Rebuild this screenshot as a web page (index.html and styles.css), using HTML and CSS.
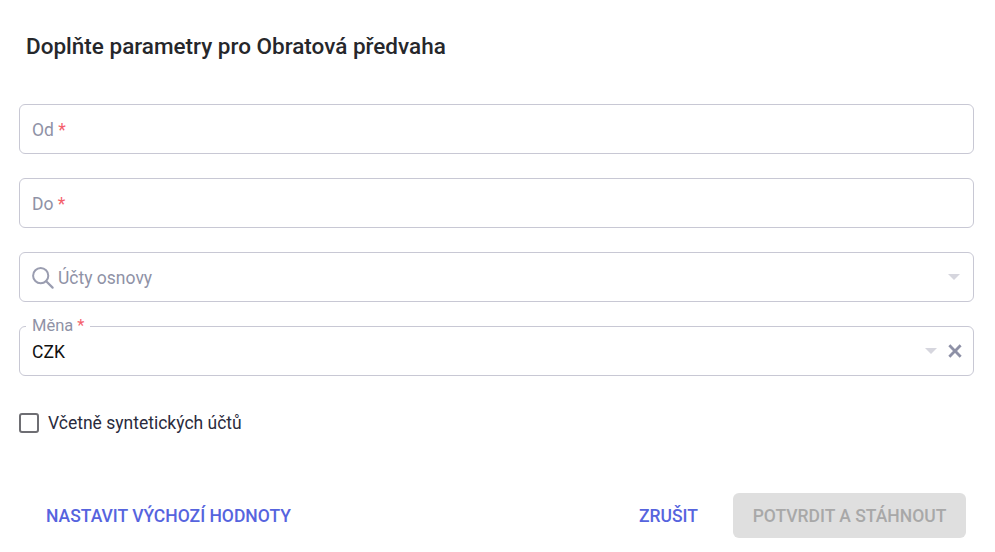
FILE: index.html
```html
<!DOCTYPE html>
<html lang="cs">
<head>
<meta charset="utf-8">
<title>Obratová předvaha</title>
<link rel="stylesheet" href="styles.css">
</head>
<body>
<div class="dialog">
  <h2 class="title">Doplňte parametry pro Obratová předvaha</h2>
  <form class="form">
    <div class="field"><span class="label">Od <span class="req">*</span></span></div>
    <div class="field"><span class="label">Do <span class="req">*</span></span></div>
    <div class="field">
      <svg class="search" width="22" height="22" viewBox="0 0 22 22"><circle cx="8.7" cy="8.7" r="7.6" fill="none" stroke="#9a9db0" stroke-width="2"/><path d="M14.2 14.2 20.6 20.6" fill="none" stroke="#9a9db0" stroke-width="2.2" stroke-linecap="round"/></svg>
      <span class="label">Účty osnovy</span>
      <span class="spacer"></span>
      <span class="caret"></span>
    </div>
    <div class="field field-notch">
      <span class="legend">Měna <span class="req">*</span></span>
      <span class="value">CZK</span>
      <span class="spacer"></span>
      <span class="caret caret-near"></span>
      <svg class="clear" width="20" height="20" viewBox="0 0 24 24"><path fill="#8d90a6" stroke="#8d90a6" stroke-width="1.4" d="M19 6.41 17.59 5 12 10.59 6.41 5 5 6.41 10.59 12 5 17.59 6.41 19 12 13.41 17.59 19 19 17.59 13.41 12z"/></svg>
    </div>
    <label class="check"><span class="box"></span><span>Včetně syntetických účtů</span></label>
  </form>
  <div class="actions">
    <button type="button" class="btn btn-reset">NASTAVIT VÝCHOZÍ HODNOTY</button>
    <span class="spacer"></span>
    <button type="button" class="btn btn-cancel">ZRUŠIT</button>
    <button type="button" class="btn btn-disabled">POTVRDIT A STÁHNOUT</button>
  </div>
</div>
</body>
</html>
```
FILE: styles.css
```css
* { box-sizing: border-box; }
html, body { margin: 0; padding: 0; background: #fff; }
body { font-family: Roboto, "Liberation Sans", sans-serif; width: 995px; height: 552px; overflow: hidden; }
.dialog { display: flex; flex-direction: column; height: 552px; }
.title { margin: 0; padding: 32px 26px 0; font-size: 22.5px; line-height: 28px; font-weight: 500; color: #26272b; }
.form { display: flex; flex-direction: column; gap: 24px; padding: 44px 21px 0 19px; }
.field { position: relative; display: flex; align-items: center; height: 50px; padding: 0 12px; border: 1px solid #c8c8d4; border-radius: 6px; background: #fff; }
.label { font-size: 17.5px; color: #8f92a6; margin-top: 2px; }
.req { color: #f4606c; }
.spacer { flex: 1; }
.search { margin-right: 4px; margin-top: 1px; }
.caret { width: 0; height: 0; margin-right: 1px; border-left: 6px solid transparent; border-right: 6px solid transparent; border-top: 6px solid #d6d6de; }
.caret-near { margin-right: 8px; }
.clear { margin-right: -4px; }
.field-notch .value { font-size: 17.5px; color: #111; margin-top: 1px; }
.legend { position: absolute; left: 6px; top: -9px; padding: 0 6px; background: #fff; font-size: 16.5px; line-height: 16px; color: #8f92a6; }
.check { display: flex; align-items: center; gap: 9px; margin-top: 13px; font-size: 17.5px; line-height: 20px; color: #2a2b3d; }
.box { width: 20px; height: 20px; border: 2px solid #6e6e73; border-radius: 3px; }
.actions { display: flex; align-items: center; gap: 20px; padding: 60px 29px 0 26px; }
.btn { height: 45px; padding: 0 20px; border: 0; border-radius: 6px; background: transparent; font: 500 17.5px Roboto, "Liberation Sans", sans-serif; color: #5664de; }
.btn-cancel { padding: 0 15px 0 14px; }
.btn-disabled { background: #dfdfdf; color: #a8a8a8; width: 233px; padding: 0; }
```
